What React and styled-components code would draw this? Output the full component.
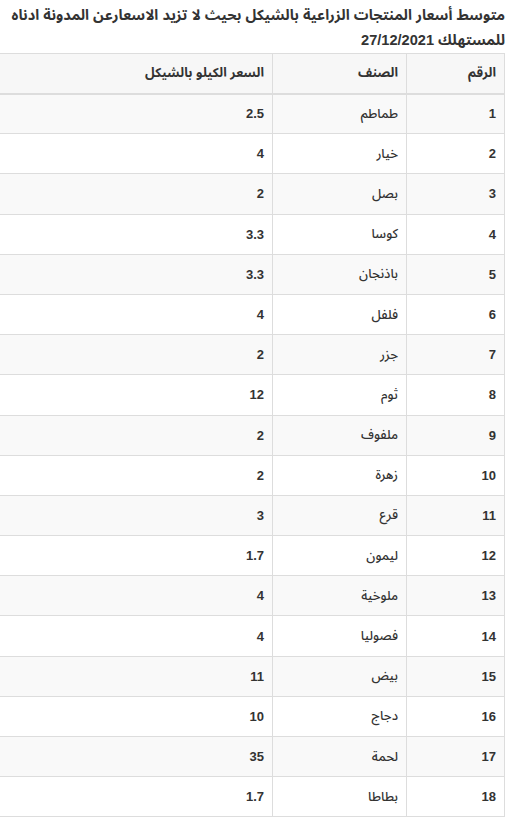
import React from "react";
import styled, { createGlobalStyle } from "styled-components";

const GlobalStyle = createGlobalStyle`
  html, body {
    margin: 0;
    padding: 0;
    background: #ffffff;
  }
  body {
    font-family: "Liberation Sans", "Noto Sans Arabic", "DejaVu Sans", sans-serif;
    color: #333333;
  }
`;

const Page = styled.div`
  direction: rtl;
  padding: 3px 7px 0 0;
  width: 512px;
  box-sizing: border-box;
`;

const Title = styled.h1`
  margin: 0;
  font-size: 14.6px;
  font-weight: bold;
  line-height: 25px;
  color: #333333;
  text-align: right;
  white-space: nowrap;
`;

const Table = styled.table`
  width: 100%;
  border-collapse: collapse;
  border-top: 1px solid #dddddd;
  border-right: 1px solid #dddddd;
  table-layout: fixed;
  font-size: 13px;
`;

const HeadRow = styled.tr`
  height: 40px;
  background: #f7f7f7;
`;

const HeadCell = styled.th`
  padding: 0 8px;
  text-align: right;
  font-weight: bold;
  border-bottom: 2px solid #dddddd;
  border-left: ${(p) => (p.$last ? "none" : "1px solid #dddddd")};
  width: ${(p) => p.$width || "auto"};
`;

const Row = styled.tr`
  height: 40.2px;
  background: ${(p) => (p.$odd ? "#f9f9f9" : "#ffffff")};
`;

const Cell = styled.td`
  padding: 0 8px;
  text-align: right;
  font-weight: ${(p) => (p.$text ? 500 : "bold")};
  border-bottom: 1px solid #dddddd;
  border-left: ${(p) => (p.$last ? "none" : "1px solid #dddddd")};
`;

const items = [
  ["طماطم", "2.5"],
  ["خيار", "4"],
  ["بصل", "2"],
  ["كوسا", "3.3"],
  ["باذنجان", "3.3"],
  ["فلفل", "4"],
  ["جزر", "2"],
  ["ثوم", "12"],
  ["ملفوف", "2"],
  ["زهرة", "2"],
  ["قرع", "3"],
  ["ليمون", "1.7"],
  ["ملوخية", "4"],
  ["فصوليا", "4"],
  ["بيض", "11"],
  ["دجاج", "10"],
  ["لحمة", "35"],
  ["بطاطا", "1.7"],
];

const App = () => {
  return (
    <Page>
      <GlobalStyle />
      <Title>
        متوسط أسعار المنتجات الزراعية بالشيكل بحيث لا تزيد الاسعارعن المدونة
        ادناه
        <br />
        للمستهلك 27/12/2021
      </Title>
      <Table>
        <thead>
          <HeadRow>
            <HeadCell $width="81px">الرقم</HeadCell>
            <HeadCell $width="117px">الصنف</HeadCell>
            <HeadCell $last>السعر الكيلو بالشيكل</HeadCell>
          </HeadRow>
        </thead>
        <tbody>
          {items.map(([name, price], i) => (
            <Row key={name} $odd={i % 2 === 0}>
              <Cell>{i + 1}</Cell>
              <Cell $text>{name}</Cell>
              <Cell $last>{price}</Cell>
            </Row>
          ))}
        </tbody>
      </Table>
    </Page>
  );
};

export default App;
